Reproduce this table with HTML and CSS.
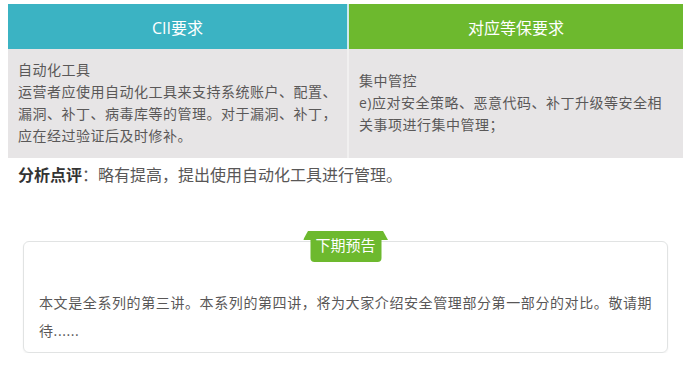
FILE: index.html
```html
<!DOCTYPE html>
<html lang="zh-CN">
<head>
<meta charset="utf-8">
<title>CII要求 对比</title>
<link rel="stylesheet" href="styles.css">
</head>
<body>
<div class="page">
  <table class="cmp">
    <thead>
      <tr>
        <th class="col-cii">CII要求</th>
        <th class="col-dj">对应等保要求</th>
      </tr>
    </thead>
    <tbody>
      <tr>
        <td class="cell-left">自动化工具<br>运营者应使用自动化工具来支持系统账户、配置、漏洞、补丁、病毒库等的管理。对于漏洞、补丁，应在经过验证后及时修补。</td>
        <td class="cell-right">集中管控<br>e)应对安全策略、恶意代码、补丁升级等安全相关事项进行集中管理；</td>
      </tr>
    </tbody>
  </table>

  <p class="comment"><strong class="comment-label">分析点评</strong>：略有提高，提出使用自动化工具进行管理。</p>

  <div class="preview">
    <div class="badge">下期预告</div>
    <p class="preview-text">本文是全系列的第三讲。本系列的第四讲，将为大家介绍安全管理部分第一部分的对比。敬请期待......</p>
  </div>
</div>
</body>
</html>
```
FILE: styles.css
```css
* { box-sizing: border-box; }

html, body {
  margin: 0;
  padding: 0;
  background: #ffffff;
}

body {
  font-family: "Open Sans", "Noto Sans CJK SC", sans-serif;
  color: #595757;
}

.page {
  padding: 4px 11px 0 8px;
}

.cmp {
  width: 675px;
  border-collapse: collapse;
  table-layout: fixed;
}

.cmp th {
  height: 45px;
  padding: 0;
  font-size: 16px;
  font-weight: normal;
  color: #ffffff;
  text-align: center;
  vertical-align: middle;
}

.col-cii {
  width: 340px;
  background: #3bb3c3;
  border-right: 2px solid #cfeaee;
}

.col-dj {
  background: #6db92e;
}

.cmp td {
  background: #e7e5e6;
  font-size: 14px;
  line-height: 22px;
  letter-spacing: 0.5px;
  vertical-align: middle;
  padding: 10px 8px 11px 10px;
  color: #5a5858;
}

.cell-left {
  border-right: 2px solid #f1f0f0;
}

.cell-right {
  padding-left: 11px;
  letter-spacing: 0.8px;
}

.comment {
  margin: 0;
  padding: 5px 0 0 10px;
  font-size: 16px;
  line-height: 24px;
  color: #595757;
}

.comment-label {
  color: #333333;
  font-weight: bold;
}

.preview {
  position: relative;
  margin: 54px 0 0 15px;
  width: 645px;
  border: 1px solid #e1e3e3;
  border-radius: 6px;
  box-shadow: 0 1px 2px rgba(0, 0, 0, 0.06);
  padding: 47px 14px 7px 15px;
}

.badge {
  position: absolute;
  top: -11px;
  left: 50%;
  transform: translateX(-50%);
  width: 71px;
  height: 31px;
  background: #6db92e;
  border-radius: 0 0 4px 4px;
  color: #ffffff;
  font-size: 15px;
  line-height: 28px;
  text-align: center;
}

.badge::before {
  content: "";
  position: absolute;
  top: 0;
  left: -7px;
  width: 85px;
  height: 9px;
  background: #6db92e;
  clip-path: polygon(5px 0, 80px 0, 85px 9px, 0 9px);
  z-index: -1;
}

.preview-text {
  margin: 0;
  font-size: 14px;
  line-height: 28px;
  letter-spacing: 0.6px;
  color: #595757;
}
```
